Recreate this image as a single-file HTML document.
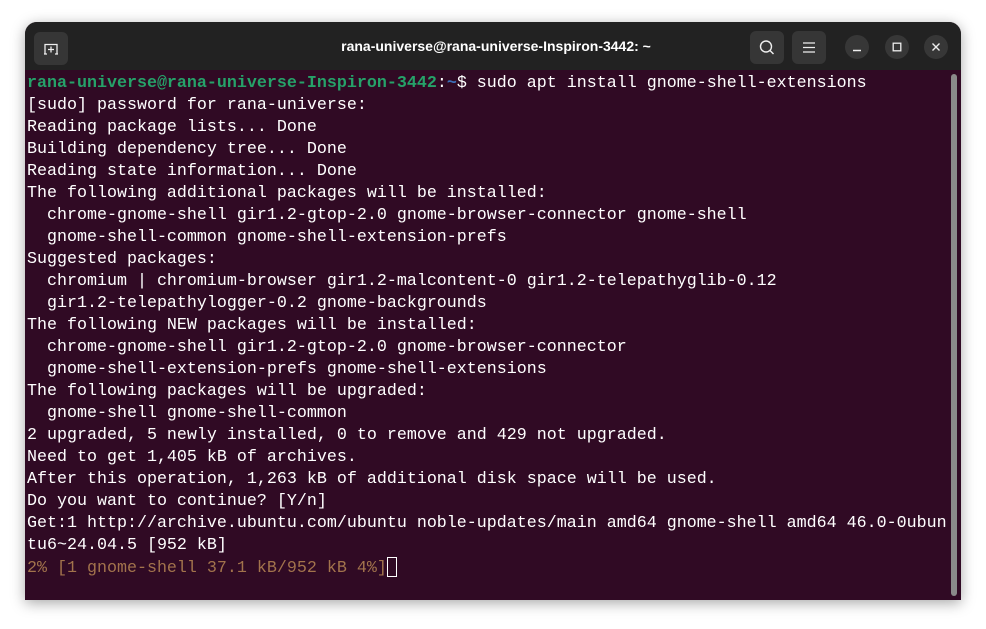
<!DOCTYPE html>
<html><head><meta charset="utf-8"><style>
html,body{margin:0;padding:0;background:#fff;width:986px;height:629px;overflow:hidden}
.win{position:absolute;left:25px;top:22px;width:936px;height:578px;background:#300a24;border-radius:12px 12px 0 0;overflow:hidden;box-shadow:0 3px 14px rgba(0,0,0,.35)}
.tb{position:absolute;left:0;top:0;width:936px;height:48px;background:#222222}
.title{position:absolute;left:0;right:0;top:0;height:48px;text-align:center;color:#fff;font-family:"Liberation Sans",sans-serif;font-weight:bold;font-size:14px;line-height:48px;padding-left:6px}
.btn{position:absolute;top:9px;width:34px;height:33px;background:#363636;border-radius:6px}
.cb{position:absolute;top:13px;width:24px;height:24px;border-radius:50%;background:#373737}
.term{position:absolute;left:2px;top:51px;font-family:"Liberation Mono",monospace;font-size:16.67px;line-height:22px;color:#fff;white-space:pre}
.g{color:#26a269;font-weight:bold}.b{color:#3d6fb8;font-weight:bold}.o{color:#a2734c}
.cur{display:inline-block;width:10px;height:20px;border:1px solid #fff;box-sizing:border-box;vertical-align:-5px}
.sb{position:absolute;left:926px;top:52px;width:6px;height:522px;background:#8a8a8a;border-radius:3px}
</style></head><body>
<div class="win">
<div class="tb">
<div class="btn" style="left:9px;top:10px"><svg width="34" height="33"><path d="M11 22V12.5H23V22M17 14.5v6M14 17.5h6M10 22h3M21 22h3" stroke="#eee" stroke-width="1.3" fill="none"/></svg></div>
<div class="title">rana-universe@rana-universe-Inspiron-3442: ~</div>
<div class="btn" style="left:725px"><svg width="34" height="33"><circle cx="16" cy="15.5" r="5.5" stroke="#eee" stroke-width="1.4" fill="none"/><path d="M20 19.5l3.5 3.5" stroke="#eee" stroke-width="1.4"/></svg></div>
<div class="btn" style="left:767px"><svg width="34" height="33"><path d="M11 12h12M11 16.5h12M11 21h12" stroke="#eee" stroke-width="1.3"/></svg></div>
<div class="cb" style="left:820px"><svg width="24" height="24"><path d="M8 15.5h8" stroke="#eee" stroke-width="1.4"/></svg></div>
<div class="cb" style="left:860px"><svg width="24" height="24"><rect x="8.2" y="8.2" width="7.6" height="7.6" stroke="#eee" stroke-width="1.3" fill="none"/></svg></div>
<div class="cb" style="left:899px"><svg width="24" height="24"><path d="M8.5 8.5l7 7M15.5 8.5l-7 7" stroke="#eee" stroke-width="1.4"/></svg></div>
</div>
<div class="term"><span class="g">rana-universe@rana-universe-Inspiron-3442</span>:<span class="b">~</span>$ sudo apt install gnome-shell-extensions
[sudo] password for rana-universe:
Reading package lists... Done
Building dependency tree... Done
Reading state information... Done
The following additional packages will be installed:
  chrome-gnome-shell gir1.2-gtop-2.0 gnome-browser-connector gnome-shell
  gnome-shell-common gnome-shell-extension-prefs
Suggested packages:
  chromium | chromium-browser gir1.2-malcontent-0 gir1.2-telepathyglib-0.12
  gir1.2-telepathylogger-0.2 gnome-backgrounds
The following NEW packages will be installed:
  chrome-gnome-shell gir1.2-gtop-2.0 gnome-browser-connector
  gnome-shell-extension-prefs gnome-shell-extensions
The following packages will be upgraded:
  gnome-shell gnome-shell-common
2 upgraded, 5 newly installed, 0 to remove and 429 not upgraded.
Need to get 1,405 kB of archives.
After this operation, 1,263 kB of additional disk space will be used.
Do you want to continue? [Y/n]
Get:1 http://archive.ubuntu.com/ubuntu noble-updates/main amd64 gnome-shell amd64 46.0-0ubun
tu6~24.04.5 [952 kB]
<span class="o">2% [1 gnome-shell 37.1 kB/952 kB 4%]</span><span class="cur"></span></div>
<div class="sb"></div>
</div>
</body></html>
